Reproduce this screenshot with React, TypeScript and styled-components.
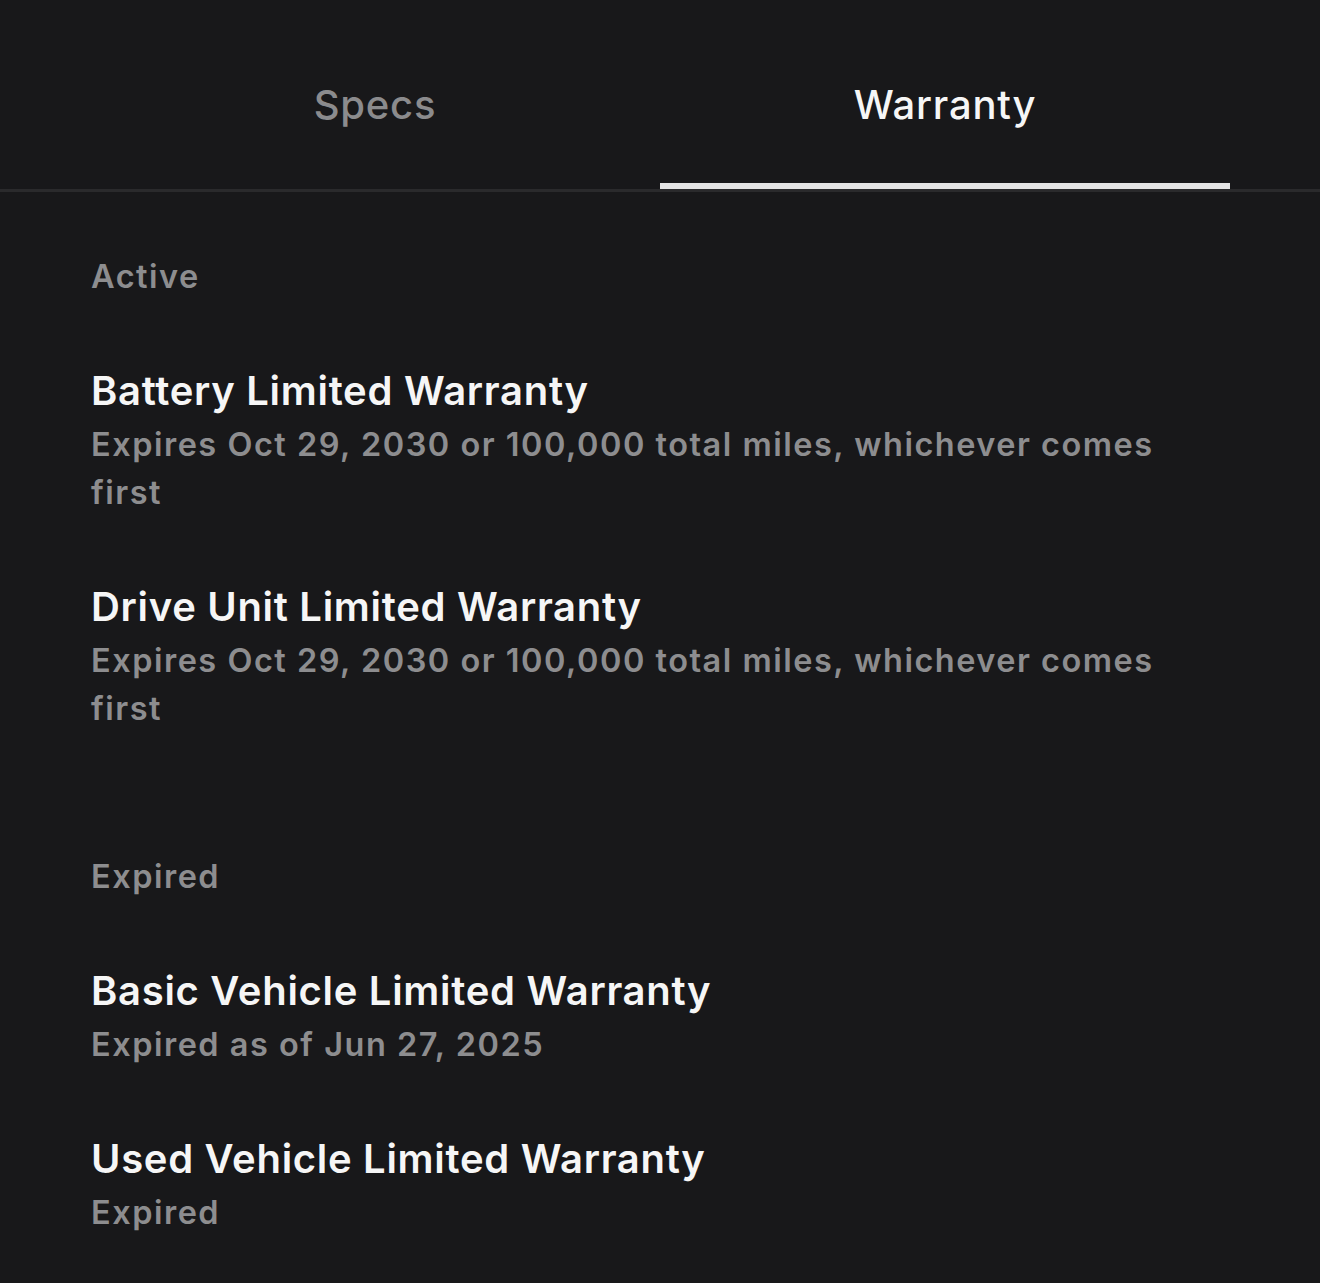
import styled, { createGlobalStyle } from 'styled-components'

interface Warranty {
  name: string
  detail: string
}

interface Section {
  label: string
  items: Warranty[]
}

const sections: Section[] = [
  {
    label: 'Active',
    items: [
      {
        name: 'Battery Limited Warranty',
        detail: 'Expires Oct 29, 2030 or 100,000 total miles, whichever comes first',
      },
      {
        name: 'Drive Unit Limited Warranty',
        detail: 'Expires Oct 29, 2030 or 100,000 total miles, whichever comes first',
      },
    ],
  },
  {
    label: 'Expired',
    items: [
      { name: 'Basic Vehicle Limited Warranty', detail: 'Expired as of Jun 27, 2025' },
      { name: 'Used Vehicle Limited Warranty', detail: 'Expired' },
    ],
  },
]

const GlobalStyle = createGlobalStyle`
  html, body {
    margin: 0;
    background: #18181a;
  }
  body {
    font-family: Inter, "Noto Sans", sans-serif;
    -webkit-font-smoothing: antialiased;
  }
`

const Page = styled.div({
  minHeight: '1283px',
  background: '#18181a',
  color: '#f4f4f4',
})

const TabBar = styled.nav({
  display: 'grid',
  gridTemplateColumns: '1fr 1fr',
  padding: '0 90px',
  borderBottom: '3px solid #2a2a2c',
})

const Tab = styled.div<{ $active?: boolean }>(({ $active }) => ({
  boxSizing: 'border-box',
  height: '189px',
  paddingTop: '80px',
  lineHeight: '50px',
  textAlign: 'center',
  fontSize: '40px',
  fontWeight: 500,
  letterSpacing: '0.8px',
  color: $active ? '#f6f6f6' : '#8b8b8d',
  borderBottom: `6px solid ${$active ? '#e4e4e4' : 'transparent'}`,
}))

const Content = styled.main({
  padding: '0 120px 0 91px',
})

const Group = styled.section({
  marginTop: '61px',
  '& + &': {
    marginTop: '120px',
  },
})

const Label = styled.h3({
  margin: 0,
  fontSize: '32.5px',
  lineHeight: '48px',
  fontWeight: 600,
  letterSpacing: '1.5px',
  color: '#8d8d8f',
})

const Item = styled.div({
  marginTop: '66px',
})

const Title = styled.div({
  fontSize: '40px',
  lineHeight: '48px',
  fontWeight: 600,
  letterSpacing: '0.7px',
  color: '#f6f6f6',
  marginBottom: '6px',
})

const Detail = styled.div({
  fontSize: '32.5px',
  lineHeight: '48px',
  fontWeight: 600,
  letterSpacing: '1.5px',
  color: '#8d8d8f',
})

function App() {
  return (
    <Page>
      <GlobalStyle />
      <TabBar>
        <Tab>Specs</Tab>
        <Tab $active>Warranty</Tab>
      </TabBar>
      <Content>
        {sections.map(section => (
          <Group key={section.label}>
            <Label>{section.label}</Label>
            {section.items.map(item => (
              <Item key={item.name}>
                <Title>{item.name}</Title>
                <Detail>{item.detail}</Detail>
              </Item>
            ))}
          </Group>
        ))}
      </Content>
    </Page>
  )
}

export default App
